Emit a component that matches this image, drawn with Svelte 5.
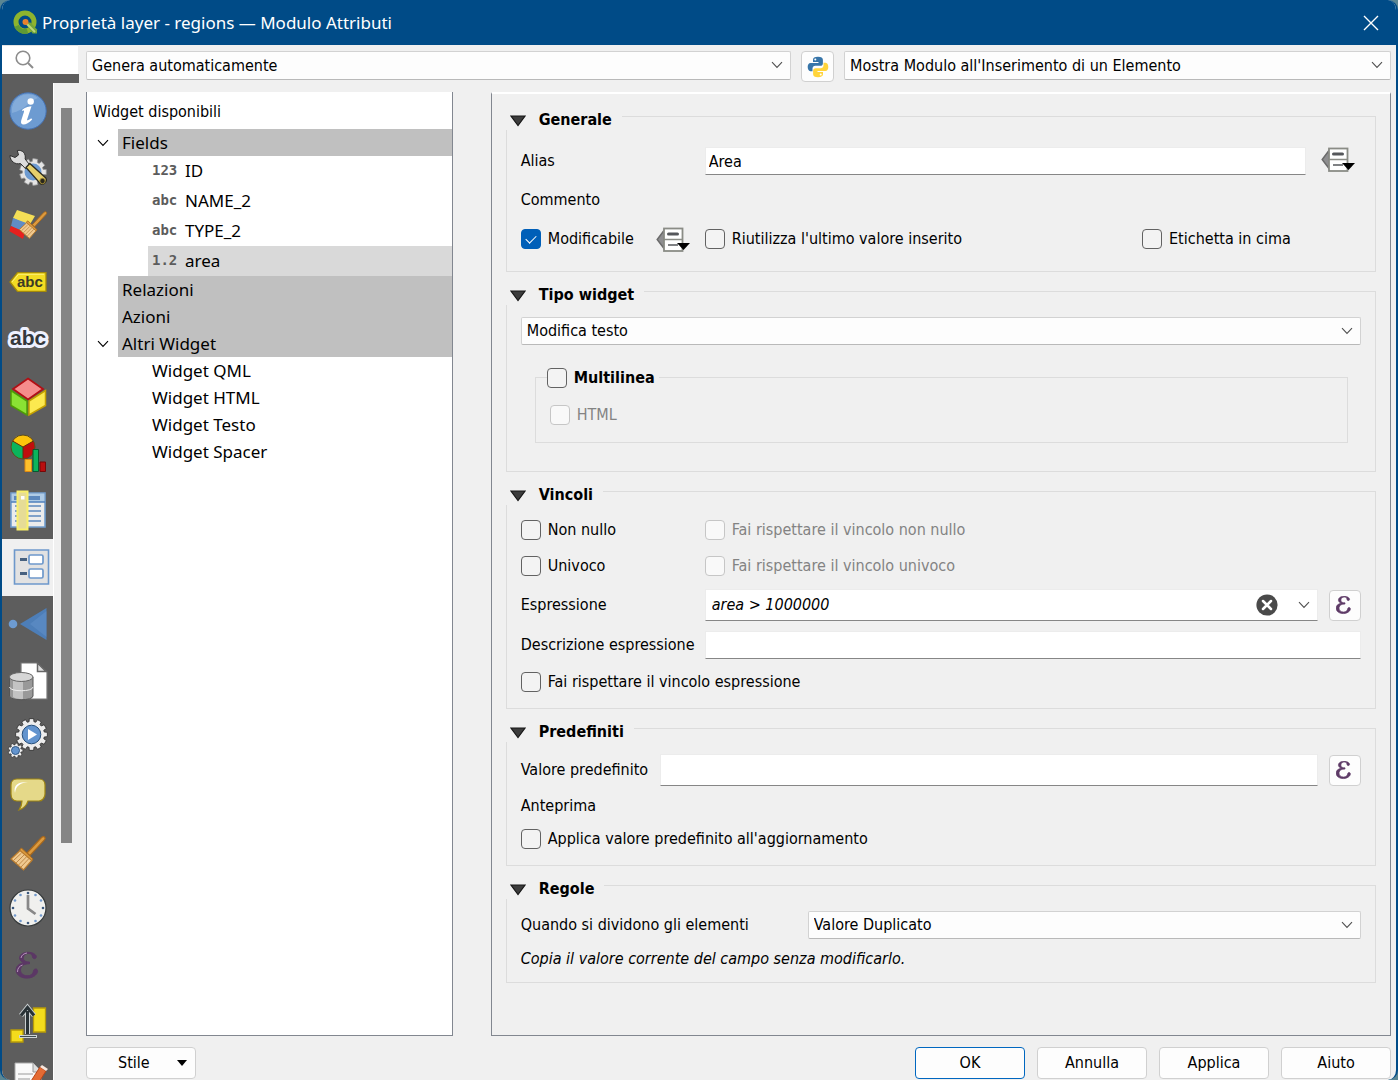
<script lang="ts">
  const tools = ['info', 'source', 'style', 'labels', 'masks', 'view3d', 'diagrams', 'fields', 'form', 'joins', 'storage', 'actions', 'display', 'rendering', 'temporal', 'variables', 'elevation', 'metadata'];
  const toolNames = ['Informazioni', 'Sorgente', 'Simbologia', 'Etichette', 'Maschere', 'Vista 3D', 'Diagrammi', 'Campi', 'Modulo Attributi', 'Join', 'Memoria ausiliaria', 'Azioni', 'Visualizza', 'Visualizzazione', 'Temporale', 'Variabili', 'Elevazione', 'Metadati'];
  const fields = [
    { type: '123', name: 'ID' },
    { type: 'abc', name: 'NAME_2' },
    { type: 'abc', name: 'TYPE_2' },
    { type: '1.2', name: 'area' }
  ];
  const extras = ['Widget QML', 'Widget HTML', 'Widget Testo', 'Widget Spacer'];
  const clockDots = Array.from({ length: 12 }, (_, i) => ({
    x: 19 + 15 * Math.sin((i * Math.PI) / 6),
    y: 19 - 15 * Math.cos((i * Math.PI) / 6),
    major: i % 3 === 0
  }));
  let selected = $state('area');
  let tool = $state('form');
  let alias = $state('Area');
  let expression = $state('area > 1000000');
  let editable = $state(true);
  let multiline = $state(false);
  let notNull = $state(false);
  let unique = $state(false);

  function gear(cx: number, cy: number, r: number, depth: number, teeth: number) {
    const pts: string[] = [];
    for (let i = 0; i < teeth; i++) {
      const step = (Math.PI * 2) / teeth;
      [[-0.36, r - depth], [-0.26, r], [0.26, r], [0.36, r - depth]].forEach(([o, rad]) => {
        const a = (i + o) * step;
        pts.push(`${(cx + rad * Math.cos(a)).toFixed(2)},${(cy + rad * Math.sin(a)).toFixed(2)}`);
      });
    }
    return pts.join(' ');
  }
</script>

{#snippet chevron()}
  <svg class="chevron" width="12" height="8" viewBox="0 0 12 8" aria-hidden="true"><path d="M1 1.2 6 6.4 11 1.2" fill="none" stroke="currentColor" stroke-width="1.1" /></svg>
{/snippet}

{#snippet epsilonPath()}
  <path d="M21 3.5C18 .5 9 .2 6.3 4.5 4.300 8 7 10.700 10 11.700 5 12.500 1.500 15.500 2.200 20 3.200 26.500 12 28.500 18 26.200 21.500 24.800 24 22 23.500 19.500 23 17.300 19.800 17.600 19.500 20 19.300 22.500 17 25 13 24.800 8.500 24.600 6 21.500 6.600 18 7.200 14.300 10.500 12.800 15.500 12.800L15.500 11C11.500 11.100 9.200 9.500 9.300 6.800 9.400 3.800 12 2.200 15 2.400 17.500 2.600 18.300 4 18.500 6 18.700 8 21.800 8.200 22.300 6.200 22.500 5.200 22 4.400 21 3.500Z" />
{/snippet}

{#snippet overrideButton(label: string)}
  <button class="override" type="button" aria-label={label}>
    <svg width="34" height="28" viewBox="0 -1 34 28" aria-hidden="true">
      <path d="M8 4.500 1.200 13.500 8 22.500Z" fill="#8e8e90" stroke="#6b6b6b" stroke-width="1.500" />
      <rect x="8" y="2.500" width="18.500" height="22.500" fill="#fff" stroke="#8a8c86" stroke-width="1.800" />
      <path d="M8 13.500h18.500" stroke="#8a8c86" stroke-width="1.500" />
      <rect x="11" y="6.500" width="12" height="3" rx="1.500" fill="#55575b" />
      <path d="M12 19h10" stroke="#55575b" stroke-width="1.500" />
      <path d="M21 17h13l-6.500 7Z" fill="#000" />
    </svg>
  </button>
{/snippet}

{#snippet epsilonButton(label: string)}
  <button class="eps" type="button" aria-label={label}>
    <svg width="18" height="19" viewBox="2 1 27 28" fill="#5d3a66" stroke="#5d3a66" stroke-width="1" aria-hidden="true">{@render epsilonPath()}</svg>
  </button>
{/snippet}

{#snippet header(title: string)}
  <h2 class="group-head">
    <button type="button">
      <svg width="16" height="14" viewBox="0 -2 16 14" aria-hidden="true"><path d="M1 1h14L8 10.500Z" fill="#3c3c3c" stroke="#161616" stroke-width="1.200" /></svg>
      {title}
    </button>
  </h2>
{/snippet}

{#snippet brush()}
  <path d="M19 21 33.500 5.500c1.200-1.200 2.800-1 3.300-.3.600.8.300 2-.6 2.900L22 23.500Z" fill="#dc9a3e" stroke="#a8681c" stroke-width="1.200" />
  <path d="m14 16.500 10.500 10c1 1-.4 2.400-1.500 2.200L12 19c-.6-1.200.8-3.500 2-2.500Z" fill="#dc9a3e" stroke="#a8681c" />
  <path d="M12 18.500 3 27l12.500 11 8.300-9.500Z" fill="#efc98f" stroke="#b87a2c" stroke-width="1.200" />
  <path d="m5.500 28.500 8-7.500m-5.500 10 8-8m-5.500 10 8-8.200m-5.500 10.200 8-8.500" stroke="#b98242" stroke-width=".9" />
{/snippet}

<div class="window">
  <header class="titlebar">
    <svg width="25" height="25" viewBox="0 0 25 25" aria-hidden="true">
      <circle cx="12" cy="12" r="9" fill="none" stroke="#8db42e" stroke-width="5" />
      <path d="M3.500 16a9.500 9.500 0 0 0 11 5.200" fill="none" stroke="#5f9a35" stroke-width="5" />
      <path d="M12 12.500h5.500l6.500 7v4h-4.500Z" fill="#72a63a" />
      <path d="m13.500 13.500 8.500 8.500" stroke="#bcd67a" stroke-width="2" />
      <circle cx="12.500" cy="12" r="3" fill="#e8812d" />
    </svg>
    <h1>Proprietà layer - regions — Modulo Attributi</h1>
    <button class="close" type="button" aria-label="Chiudi">
      <svg width="16" height="16" viewBox="0 0 16 16" aria-hidden="true"><path d="m1 1 14 14M15 1 1 15" stroke="#fff" stroke-width="1.400" /></svg>
    </button>
  </header>

  <div class="shell">
    <aside>
      <div class="search">
        <svg width="20" height="20" viewBox="0 0 20 20" aria-hidden="true"><circle cx="8" cy="8" r="6.800" fill="none" stroke="#8c8c8c" stroke-width="1.600" /><path d="m13 13 5 5" stroke="#8c8c8c" stroke-width="2" /></svg>
        <input type="search" aria-label="Cerca" />
      </div>
      <div class="strip"></div>
      <div class="tools-area">
        <nav>
          {#each tools as t, i}
            <button type="button" class:active={tool === t} aria-label={toolNames[i]} onclick={() => (tool = t)}>
              <svg width="40" height="40" viewBox="0 0 40 40" aria-hidden="true">
                {#if t === 'info'}
                  <circle cx="20" cy="20" r="18.200" fill="#6d9bd1" stroke="#4673b4" />
                  <path d="M4 22A16 16 0 0 1 30 7C22 9 16 20 4 22Z" fill="#8fb3de" opacity=".7" />
                  <circle cx="22.700" cy="10.500" r="3.200" fill="#fff" />
                  <path d="M14.500 18.500c3-2.500 7-3.300 9-3.300l-4.300 13c-.6 2 .8 1.300 4-1l1 1.200c-3.200 3.400-6.200 5-8.700 5-2 0-3-1.500-2.300-4l2.800-8.700c.4-1.500-.6-1.600-2-.6Z" fill="#fff" />
                {:else if t === 'source'}
                  <polygon points={gear(25, 24, 13.5, 3, 9)} fill="#e4e4e4" stroke="#969696" stroke-width=".8" />
                  <circle cx="25" cy="24" r="8.500" fill="#6d9bd1" />
                  <path d="M2 7.500 7 9.500 10.500 7 9.300 2.500c5-1 9 3 7.800 8.500l4.700 6-4 4-5.300-5.500C7 17 2 13 2 7.500Z" fill="#ddd" stroke="#303030" />
                  <path d="m18 19.500 3.800-4 16 14.500c2 3-2 7.200-5.200 6Z" fill="#e5cf6b" stroke="#2b2b20" stroke-width="1.300" />
                  <circle cx="34.500" cy="33" r="2.700" fill="#28261d" stroke="#a18b32" />
                {:else if t === 'style'}
                  <path d="m9 5 18 6-6 10L5 13Z" fill="#f4de56" /><path d="m5 13 16 6-6 9L3 21Z" fill="#608cc5" /><path d="m3 21 14 6-2 7L1 26Z" fill="#e6201e" />
                  <g transform="translate(9 3) scale(.8)">{@render brush()}</g>
                {:else if t === 'labels'}
                  <path d="M2 20 9.500 10.700H38v18.600H9.500Z" fill="#f3dc23" stroke="#a68b09" stroke-width="1.300" />
                  <path d="m4 20 6.500-7.700H36" fill="none" stroke="#fff27a" />
                  <text x="9" y="25" class="tag">abc</text>
                {:else if t === 'masks'}
                  <text x="2" y="26" class="mask">abc</text>
                {:else if t === 'view3d'}
                  <path d="M20 2.500 35 13 20 23.500 5 13Z" fill="#f68c8c" stroke="#b20f14" stroke-width="1.800" />
                  <path d="M3 14.500 19 25v14L3 29.500Z" fill="#8ae234" stroke="#4e9a06" stroke-width="1.500" />
                  <path d="M37.500 14.500 21 25v14l16.500-9.500Z" fill="#fce94f" stroke="#c4a000" stroke-width="1.500" />
                {:else if t === 'diagrams'}
                  <circle cx="15" cy="14" r="12" fill="#c00d0d" />
                  <path d="M15 14V26A12 12 0 0 1 4.600 8Z" fill="#0bb45c" /><path d="M15 14 4.600 8A12 12 0 0 1 25.400 8Z" fill="#fdc40b" />
                  <path d="M4.600 8 15 14 25.400 8M15 14v12" fill="none" stroke="#61300c" /><circle cx="15" cy="14" r="12" fill="none" stroke="#5b501c" />
                  <path d="M17 26.500h6.500v12H17Z" fill="#fdc02c" stroke="#e08a11" /><path d="M25 16.500h5.500v22H25Z" fill="#0bb45c" stroke="#07592f" /><path d="M32 29h5.500v9.500H32Z" fill="#b90f0f" stroke="#740909" />
                {:else if t === 'fields'}
                  <path d="M3 3h34v34H3Z" fill="#ececec" stroke="#729fcf" stroke-width="1.600" /><path d="M4 4h32v8H4Z" fill="#afcbe5" /><path d="M3 12h34" stroke="#4f81bd" stroke-width="1.500" />
                  <path d="M6 8h26" stroke="#5c88bd" stroke-width="4" /><path d="M7 16h4m7 0h15M7 21h4m7 0h15M7 26h4m7 0h15M7 31h4m7 0h15" stroke="#5c88bd" stroke-width="1.500" />
                  <path d="M9.500 1.500h10v38h-10Z" fill="#e6dc96" stroke="#f9f06a" stroke-width="2" /><path d="M13 6h3.500v3.500H13Z" fill="#fff" />
                {:else if t === 'form'}
                  <path d="M6.500 3h34v34h-34Z" fill="#e2e2e2" stroke="#6d98cb" stroke-width="1.600" />
                  <rect x="21" y="8" width="14" height="9" rx="1.500" fill="#fff" stroke="#6d98cb" stroke-width="1.700" /><rect x="21" y="22" width="14" height="9" rx="1.500" fill="#fff" stroke="#6d98cb" stroke-width="1.700" />
                  <path d="M12 12.500h7M12 26.500h7" stroke="#47617f" stroke-width="3" />
                {:else if t === 'joins'}
                  <circle cx="5" cy="20" r="4.300" fill="#6d9bd1" /><path d="M12 20 38.500 4v32Z" fill="#4d7eb8" /><path d="m22 20 16.500-13v26Z" fill="#6492ca" opacity=".5" />
                {:else if t === 'storage'}
                  <path d="M13 2h16l10 9v27H13Z" fill="#fff" stroke="#777" stroke-width="1.200" /><path d="M29.500 2v8.500H38Z" fill="#ddd" stroke="#666" stroke-width="1.500" />
                  <path d="M1.500 16v19c0 5 23.500 5 23.500 0V16Z" fill="#999" stroke="#565656" /><path d="M5 18v18c3 2 8 2 10 2V19Z" fill="#d2d2d2" opacity=".75" /><ellipse cx="13.200" cy="16" rx="11.800" ry="4.500" fill="#d6d6d6" stroke="#666" /><path d="M1.500 26c0 5 23.500 5 23.500 0" fill="none" stroke="#eee" />
                {:else if t === 'actions'}
                  <polygon points={gear(23.5, 16.5, 16, 3, 12)} fill="#ededed" stroke="#2c2c2c" stroke-width=".8" /><circle cx="23.500" cy="16.500" r="9.300" fill="#6394ce" stroke="#244e7b" /><path d="m20 11 9 5.500-9 5.500Z" fill="#fff" />
                  <polygon points={gear(7.5, 32.5, 7.5, 1.7, 9)} fill="#ededed" stroke="#333" stroke-width=".7" /><circle cx="7.500" cy="32.500" r="4" fill="#6394ce" stroke="#315885" />
                {:else if t === 'display'}
                  <path d="M9 4h22c4 0 6 3 6 6v9c0 4-3 7-6 7H20c-1 4-5 8-9 9 2-3 3-6 3-9H9c-4 0-6-3-6-7v-9c0-3 2-6 6-6Z" fill="#e5d989" stroke="#a08612" stroke-width="1.200" /><path d="M7 18c-2-8 3-11 13-11-7 1-12 3-13 11Z" fill="#fff" />
                {:else if t === 'rendering'}
                  {@render brush()}
                {:else if t === 'temporal'}
                  <circle cx="20" cy="19" r="18" fill="#f0f0ee" stroke="#373b3c" stroke-width="1.200" />
                  {#each clockDots as d}<circle cx={d.x + 1} cy={d.y} r="1.300" fill={d.major ? '#3b587e' : '#7198cb'} />{/each}
                  <path d="M20 6v13.500l7.500 5.500" fill="none" stroke="#888" stroke-width="2.700" />
                {:else if t === 'variables'}
                  <g transform="translate(6 5)" fill="#5b3765" stroke="#5b3765" stroke-width="1">{@render epsilonPath()}<path d="M7 7C7.500 4 10 2.500 13 2M3.500 21c0-4 2-6 5-7" fill="none" stroke="#b795bd" /></g>
                {:else if t === 'elevation'}
                  <path d="M25.500 5H37.500v24H25.500Z" fill="#f4dc1c" stroke="#b69a09" stroke-width="1.300" /><path d="M3 27h12v12H3Z" fill="#f4dc1c" stroke="#b69a09" stroke-width="1.300" />
                  <path d="M19.500 31V8M13 12.500l6.500-8 6.500 8" fill="none" stroke="#c9cfd0" stroke-width="5" /><path d="M19.500 31V8M13 12.500l6.500-8 6.500 8" fill="none" stroke="#293236" stroke-width="3" /><path d="M11 33.500h18" stroke="#cdd3d5" stroke-width="3" /><path d="M12 33.500h16" stroke="#3f4b4f" />
                {:else}
                  <path d="M7 3h18l8 8v27H7Z" fill="#fafafa" stroke="#aaa" /><path d="M25 3v9h8" fill="#ddd" stroke="#999" /><path d="M10 14h15M10 19h12" stroke="#bbb" stroke-width="1.500" />
                  <path d="m18 29 14-22 6 4-14 22Z" fill="#e46b34" stroke="#ba4616" /><path d="m32 7 2-2 6 4-2 2Z" fill="#f6e5dc" />
                {/if}
              </svg>
            </button>
          {/each}
        </nav>
        <div class="scroll"><div class="thumb"></div></div>
      </div>
    </aside>

    <main>
      <div class="topbar">
        <div class="combo grow-a">
          <select aria-label="Tipo di disposizione"><option>Genera automaticamente</option></select>
          {@render chevron()}
        </div>
        <button class="python" type="button" aria-label="Funzione Python">
          <svg width="22" height="22" viewBox="0 0 22 22" aria-hidden="true">
            <path d="M11 .8C7.500.8 6 2 6 3.700V6h5.500v1H3.700C1.500 7 .7 9 .7 11s.9 4.200 2.700 4.200H5.500v-2.700c0-1.500 1.200-2.700 2.800-2.700h5.200c1.300 0 2.400-1 2.400-2.400V3.700C15.900 1.800 14.200.8 11 .8Z" fill="#3775a9" /><circle cx="8.300" cy="3.500" r="1" fill="#fff" />
            <path d="M11 21.200c3.500 0 5-1.200 5-2.900V16h-5.500v-1h7.800c2.200 0 3-2 3-4s-.9-4.200-2.700-4.200h-2.100v2.700c0 1.500-1.200 2.700-2.800 2.700H8.500c-1.300 0-2.400 1-2.400 2.400v3.700c0 1.900 1.700 2.900 4.900 2.900Z" fill="#ffd43b" /><circle cx="13.700" cy="18.500" r="1" fill="#fff" />
          </svg>
        </button>
        <div class="combo grow-b">
          <select aria-label="Comportamento del modulo"><option>Mostra Modulo all'Inserimento di un Elemento</option></select>
          {@render chevron()}
        </div>
      </div>

      <div class="panels">
        <section class="tree" aria-label="Widget disponibili">
          <h2>Widget disponibili</h2>
          <button type="button" class="branch"><span class="arrow">{@render chevron()}</span><span class="name">Fields</span></button>
          {#each fields as f}
            <button type="button" class="field" class:chosen={selected === f.name} onclick={() => (selected = f.name)}><span class="kind">{f.type}</span>{f.name}</button>
          {/each}
          <button type="button" class="branch"><span class="arrow"></span><span class="name">Relazioni</span></button>
          <button type="button" class="branch"><span class="arrow"></span><span class="name">Azioni</span></button>
          <button type="button" class="branch"><span class="arrow">{@render chevron()}</span><span class="name">Altri Widget</span></button>
          {#each extras as e}
            <button type="button" class="leaf">{e}</button>
          {/each}
        </section>

        <section class="settings" aria-label="Impostazioni del campo">
          <section class="group">
            {@render header('Generale')}
            <div class="body general">
              <div class="row mid">
                <label class="key" for="alias">Alias</label>
                <input id="alias" class="text" bind:value={alias} />
                <span class="override-slot">{@render overrideButton('Alias definito dai dati')}</span>
              </div>
              <div class="row short">Commento</div>
              <div class="row mid">
                <div class="key split">
                  <label class="check"><input type="checkbox" bind:checked={editable} />Modificabile</label>
                  {@render overrideButton('Modificabile definito dai dati')}
                </div>
                <label class="check wide"><input type="checkbox" />Riutilizza l'ultimo valore inserito</label>
                <label class="check last"><input type="checkbox" />Etichetta in cima</label>
              </div>
            </div>
          </section>

          <section class="group">
            {@render header('Tipo widget')}
            <div class="body widget-type">
              <div class="combo">
                <select aria-label="Tipo widget"><option>Modifica testo</option></select>
                {@render chevron()}
              </div>
              <div class="subgroup">
                <label class="check sub-head"><input type="checkbox" bind:checked={multiline} />Multilinea</label>
                <label class="check small"><input type="checkbox" disabled={!multiline} />HTML</label>
              </div>
            </div>
          </section>

          <section class="group">
            {@render header('Vincoli')}
            <div class="body">
              <div class="row line">
                <div class="key"><label class="check"><input type="checkbox" bind:checked={notNull} />Non nullo</label></div>
                <label class="check"><input type="checkbox" disabled={!notNull} />Fai rispettare il vincolo non nullo</label>
              </div>
              <div class="row line">
                <div class="key"><label class="check"><input type="checkbox" bind:checked={unique} />Univoco</label></div>
                <label class="check"><input type="checkbox" disabled={!unique} />Fai rispettare il vincolo univoco</label>
              </div>
              <div class="row tall">
                <label class="key" for="expr">Espressione</label>
                <div class="expression">
                  <input id="expr" bind:value={expression} />
                  <button type="button" aria-label="Cancella" onclick={() => (expression = '')}>
                    <svg width="22" height="22" viewBox="0 0 22 22" aria-hidden="true"><circle cx="11" cy="11" r="10.600" fill="#4a4a4a" /><path d="m7 7 8 8m0-8-8 8" stroke="#fff" stroke-width="2.500" stroke-linecap="round" /></svg>
                  </button>
                  <button type="button" aria-label="Espressioni recenti">{@render chevron()}</button>
                </div>
                {@render epsilonButton('Modifica espressione')}
              </div>
              <div class="row mid">
                <label class="key" for="descr">Descrizione espressione</label>
                <input id="descr" class="text" />
              </div>
              <div class="row line"><label class="check"><input type="checkbox" />Fai rispettare il vincolo espressione</label></div>
            </div>
          </section>

          <section class="group">
            {@render header('Predefiniti')}
            <div class="body">
              <div class="row tall">
                <label class="default-key" for="default">Valore predefinito</label>
                <input id="default" class="text" />
                {@render epsilonButton('Modifica valore predefinito')}
              </div>
              <div class="row short">Anteprima</div>
              <div class="row line"><label class="check"><input type="checkbox" />Applica valore predefinito all'aggiornamento</label></div>
            </div>
          </section>

          <section class="group">
            {@render header('Regole')}
            <div class="body">
              <div class="row mid">
                <label class="rule-key" for="rule">Quando si dividono gli elementi</label>
                <div class="combo">
                  <select id="rule"><option>Valore Duplicato</option></select>
                  {@render chevron()}
                </div>
              </div>
              <p class="row short hint">Copia il valore corrente del campo senza modificarlo.</p>
            </div>
          </section>
        </section>
      </div>

      <footer>
        <button type="button" class="push style-menu">Stile<svg width="10" height="6" viewBox="0 0 10 6" aria-hidden="true"><path d="M0 0h10L5 6Z" /></svg></button>
        <button type="button" class="push ok">OK</button>
        <button type="button" class="push">Annulla</button>
        <button type="button" class="push">Applica</button>
        <button type="button" class="push">Aiuto</button>
      </footer>
    </main>
  </div>
</div>

<style>
  :global(body) { margin: 0; background: #5b8693; }
  * { box-sizing: border-box; }
  .window {
    height: 100vh;
    display: flex;
    flex-direction: column;
    overflow: hidden;
    background: #f0f0f0;
    border: solid #004b87;
    border-width: 0 2px;
    border-radius: 10px;
    color: #000;
    font: 16px/20px "DejaVu Sans Condensed", "DejaVu Sans", sans-serif;
  }
  button, input, select { font: inherit; color: inherit; margin: 0; }
  button { padding: 0; border: 0; background: none; }
  svg { display: block; flex: none; }
  h1, h2, p { margin: 0; font: inherit; }

  .titlebar { flex: none; height: 45px; display: flex; align-items: center; gap: 4px; padding: 0 17px 0 11px; background: #004b87; color: #fff; }
  .titlebar h1 { flex: 1; font: 17px/24px "Noto Sans", sans-serif; }

  .shell { flex: 1; min-height: 0; display: flex; }
  aside { width: 77px; flex: none; display: flex; flex-direction: column; }
  .search { height: 29px; flex: none; display: flex; align-items: center; gap: 4px; padding: 0 0 1px 13px; margin-right: 1px; background: #fff; border-top: 1px solid #e4e4e4; }
  .search input { width: 30px; border: 0; outline: 0; background: none; }
  .strip { height: 9px; flex: none; background: #5d5d5d; }
  .tools-area { flex: 1; min-height: 0; display: flex; overflow: hidden; }
  nav { width: 51px; background: #5d5d5d; }
  nav button { width: 51px; height: 57px; display: flex; align-items: center; padding: 0 0 2px 6px; }
  nav .active { background: #f0f0f0; }
  .tag { font: bold 15px "Liberation Sans", sans-serif; fill: #3c3a26; }
  .mask { font: bold 21px "Liberation Sans", sans-serif; fill: #34383c; stroke: #eef1ff; stroke-width: 6px; stroke-linejoin: round; paint-order: stroke; }
  nav svg { overflow: visible; }
  .scroll { flex: 1; padding: 25px 7px 0 7px; border-left: 1px solid #fff; }
  .thumb { height: 75.6%; background: #858585; }

  main { flex: 1; min-width: 0; display: flex; flex-direction: column; padding: 6px 5px 1px 7px; }
  .topbar { display: flex; align-items: flex-start; gap: 10px; height: 41px; flex: none; }
  .combo { position: relative; flex: 1; min-width: 0; height: 28px; }
  .combo select { width: 100%; height: 100%; padding: 0 28px 0 5px; appearance: none; background: #fdfdfd; border: 1px solid #d2d2d2; border-bottom-color: #b9b9b9; border-radius: 2px; }
  .combo > :global(svg) { position: absolute; right: 8px; top: 10px; color: #505050; pointer-events: none; }
  .topbar .combo { height: 29px; }
  .grow-a { flex: 705; }
  .grow-b { flex: 547; }
  .python { width: 33px; height: 31px; display: grid; place-items: center; background: #fdfdfd; border: 1px solid #d0d0d0; border-radius: 4px; }

  .panels { flex: 1; min-height: 0; display: flex; gap: 38px; }
  .tree { width: 28.1%; flex: none; background: #fff; border: 1px solid #828790; border-top: 0; padding-top: 8px; display: flex; flex-direction: column; }
  .tree h2 { padding-left: 6px; line-height: 24px; margin-bottom: 5px; }
  .tree button { font: 17px/28px "Noto Sans", sans-serif; height: 27px; display: flex; text-align: left; }
  .branch .arrow { width: 31px; height: 27px; flex: none; display: grid; place-items: center; }
  .branch .name { flex: 1; padding-left: 4px; background: #c0c0c0; }
  .tree .field { height: 30px; line-height: 30px; margin-left: 61px; padding-left: 4px; }
  .tree .chosen { background: #d9d9d9; }
  .kind { width: 33px; flex: none; color: #5c5c5c; font: bold 14px/28px "DejaVu Sans Mono", monospace; }
  .tree .leaf { padding-left: 65px; }

  .settings { flex: 1; min-width: 0; border: 1px solid #828790; border-top: 2px solid #fff; padding: 22px 14px 0; display: flex; flex-direction: column; gap: 19px; }
  .group { border: 1px solid #dcdcdc; }
  .group-head { width: fit-content; height: 20px; margin: -7px 0 0 -1px; padding: 0 10px 0 4px; background: #f0f0f0; }
  .group-head button { display: flex; align-items: center; gap: 13px; font-weight: bold; }
  .body { padding: 12px 14px 13px; display: flex; flex-direction: column; gap: 10px; }
  .general { padding: 17px 14px 18px; gap: 13px; }
  .row { display: flex; align-items: center; }
  .short { height: 20px; }
  .general .short { height: 24px; }
  .line { height: 26px; }
  .mid { height: 28px; }
  .tall { height: 32px; }
  .key { width: 184px; flex: none; }
  .split { display: flex; justify-content: space-between; padding-right: 15px; }
  .default-key { width: 139px; flex: none; }
  .rule-key { width: 287px; flex: none; }
  .text { flex: 1; min-width: 0; height: 100%; padding: 0 3px; background: #fff; border: 1px solid #ececec; border-bottom-color: #868686; border-radius: 0; outline: 0; }
  .override-slot { width: 55px; flex: none; padding-left: 15px; }
  .check { display: flex; align-items: center; gap: 7px; white-space: nowrap; }
  .check input { appearance: none; width: 20px; height: 20px; flex: none; border: 1px solid #626262; border-radius: 4px; background: #f3f3f3; display: grid; place-items: center; }
  .check input:checked { background: #005fb8; border-color: #005fb8; }
  .check input:checked::before { content: ""; width: 9px; height: 5px; border: solid #fff; border-width: 0 0 1px 1px; transform: translateY(-1px) rotate(-45deg); }
  .check input:disabled { border-color: #c6c6c6; background: #f9f9f9; }
  .check:has(input:disabled) { color: #838383; }
  .wide { flex: 1; }
  .last { width: 219px; }

  .body.widget-type { padding-bottom: 28px; gap: 32px; }
  .widget-type .combo { flex: none; }
  .subgroup { margin: 0 13px 0 14px; height: 66px; border: 1px solid #dcdcdc; }
  .sub-head { width: fit-content; height: 20px; margin: -10px 0 0 11px; padding-right: 4px; background: #f0f0f0; font-weight: bold; }
  .small { margin: 17px 0 0 14px; }

  .expression { flex: 1; min-width: 0; height: 100%; display: flex; align-items: center; gap: 20px; padding-right: 7px; background: #fff; border: 1px solid #ececec; border-bottom-color: #868686; color: #505050; }
  .expression input { flex: 1; min-width: 0; border: 0; outline: 0; padding: 0 6px; background: none; font-style: italic; color: #000; }
  .eps { width: 32px; height: 31px; flex: none; margin-left: 11px; display: grid; place-items: center; background: #fdfdfd; border: 1px solid #d0d0d0; border-radius: 4px; }
  .hint { font-style: italic; }

  footer { flex: none; display: flex; gap: 12px; padding-top: 11px; }
  .push { width: 110px; height: 32px; background: #fdfdfd; border: 1px solid #d0d0d0; border-radius: 4px; }
  .style-menu { margin-right: auto; display: flex; align-items: center; justify-content: space-between; padding: 0 8px 0 31px; }
  .ok { border-color: #0067c0; }
</style>
